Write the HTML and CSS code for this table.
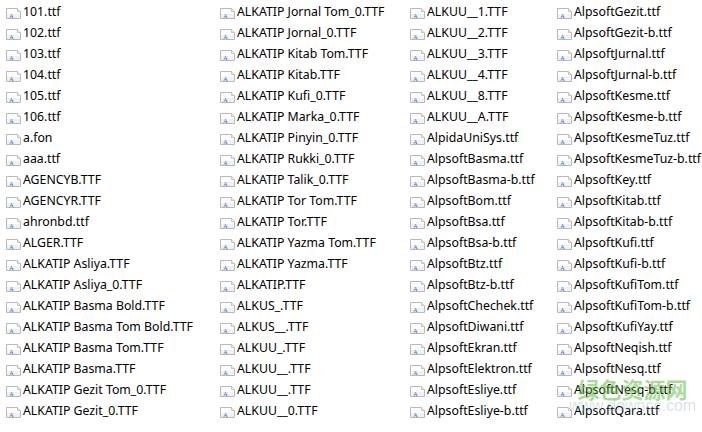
FILE: index.html
```html
<!DOCTYPE html>
<html lang="en">
<head>
  <meta charset="UTF-8">
  <title>Fonts</title>
  <link rel="stylesheet" href="styles.css">
</head>
<body>
  <div class="files" id="files">
    <!-- file rows are inserted here -->
  </div>
  <div class="watermark">
    <div class="wm-cn">绿色资源网</div>
    <div class="wm-url">www.downcc.com</div>
  </div>

  <script>
    const files = [
      '101.ttf', '102.ttf', '103.ttf', '104.ttf', '105.ttf', '106.ttf', 'a.fon', 'aaa.ttf',
      'AGENCYB.TTF', 'AGENCYR.TTF', 'ahronbd.ttf', 'ALGER.TTF', 'ALKATIP Asliya.TTF',
      'ALKATIP Asliya_0.TTF', 'ALKATIP Basma Bold.TTF', 'ALKATIP Basma Tom Bold.TTF',
      'ALKATIP Basma Tom.TTF', 'ALKATIP Basma.TTF', 'ALKATIP Gezit Tom_0.TTF', 'ALKATIP Gezit_0.TTF',

      'ALKATIP Jornal Tom_0.TTF', 'ALKATIP Jornal_0.TTF', 'ALKATIP Kitab Tom.TTF', 'ALKATIP Kitab.TTF',
      'ALKATIP Kufi_0.TTF', 'ALKATIP Marka_0.TTF', 'ALKATIP Pinyin_0.TTF', 'ALKATIP Rukki_0.TTF',
      'ALKATIP Talik_0.TTF', 'ALKATIP Tor Tom.TTF', 'ALKATIP Tor.TTF', 'ALKATIP Yazma Tom.TTF',
      'ALKATIP Yazma.TTF', 'ALKATIP.TTF', 'ALKUS_.TTF', 'ALKUS__.TTF', 'ALKUU_.TTF', 'ALKUU__.TTF',
      'ALKUU__.TTF', 'ALKUU__0.TTF',

      'ALKUU__1.TTF', 'ALKUU__2.TTF', 'ALKUU__3.TTF', 'ALKUU__4.TTF', 'ALKUU__8.TTF', 'ALKUU__A.TTF',
      'AlpidaUniSys.ttf', 'AlpsoftBasma.ttf', 'AlpsoftBasma-b.ttf', 'AlpsoftBom.ttf', 'AlpsoftBsa.ttf',
      'AlpsoftBsa-b.ttf', 'AlpsoftBtz.ttf', 'AlpsoftBtz-b.ttf', 'AlpsoftChechek.ttf', 'AlpsoftDiwani.ttf',
      'AlpsoftEkran.ttf', 'AlpsoftElektron.ttf', 'AlpsoftEsliye.ttf', 'AlpsoftEsliye-b.ttf',

      'AlpsoftGezit.ttf', 'AlpsoftGezit-b.ttf', 'AlpsoftJurnal.ttf', 'AlpsoftJurnal-b.ttf',
      'AlpsoftKesme.ttf', 'AlpsoftKesme-b.ttf', 'AlpsoftKesmeTuz.ttf', 'AlpsoftKesmeTuz-b.ttf',
      'AlpsoftKey.ttf', 'AlpsoftKitab.ttf', 'AlpsoftKitab-b.ttf', 'AlpsoftKufi.ttf', 'AlpsoftKufi-b.ttf',
      'AlpsoftKufiTom.ttf', 'AlpsoftKufiTom-b.ttf', 'AlpsoftKufiYay.ttf', 'AlpsoftNeqish.ttf',
      'AlpsoftNesq.ttf', 'AlpsoftNesq-b.ttf', 'AlpsoftQara.ttf'
    ];

    // small font file icon
    const icon = `<svg class="icon" width="17" height="11" viewBox="0 0 17 11">
      <path d="M1.5 0.5 H12.5 L15.5 3.5 V10.5 H1.5 Z" fill="#fdfdfd" stroke="#b9b9b9"/>
      <path d="M12.5 0.5 V3.5 H15.5" fill="#eeeeee" stroke="#c4c4c4"/>
      <rect x="2" y="6" width="13" height="4" fill="#eef2f7"/>
      <text x="4.2" y="9.6" font-size="6" font-family="Liberation Serif, serif" fill="#3a63b8">A</text>
    </svg>`;

    const list = document.getElementById('files');
    files.forEach(name => {
      list.innerHTML += `<div class="file">${icon}<span class="name">${name}</span></div>`;
    });
  </script>
</body>
</html>
```

FILE: styles.css
```css
body {
  margin: 0;
  background-color: #fff;
  font-family: "Noto Sans", Arial, sans-serif;
  font-size: 12.3px;
  color: #000;
}
.files {
  display: grid;
  grid-auto-flow: column;
  grid-template-rows: repeat(20, 21px);
  grid-template-columns: 214px 190px 147px 145px;
  padding: 1px 0 0 5px;
}
.file {
  display: flex;
  align-items: center;
  gap: 1px;
  white-space: nowrap;
}
.icon {
  flex: none;
  margin-top: 3px;
}
.watermark {
  position: absolute;
  left: 569px;
  top: 374px;
  pointer-events: none;
  text-align: center;
}
.wm-cn {
  font-family: "Noto Sans CJK SC", sans-serif;
  font-weight: bold;
  font-size: 22px;
  color: rgba(96, 190, 60, 0.55);
  line-height: 28px;
}
.wm-url {
  font-family: "Liberation Sans", Arial, sans-serif;
  font-size: 16px;
  color: rgba(140, 170, 190, 0.35);
  line-height: 16px;
  margin-top: -4px;
}
```
